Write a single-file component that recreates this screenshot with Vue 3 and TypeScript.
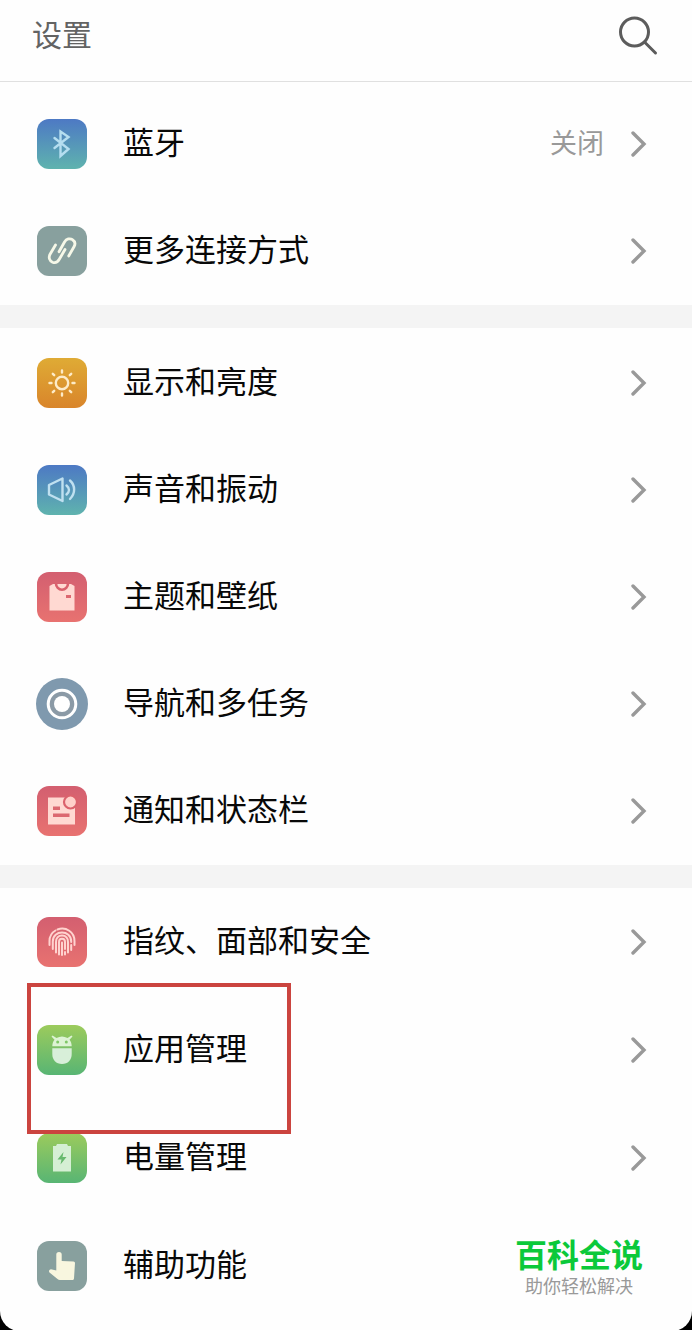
<script setup lang="ts">
type IconName =
  | 'bluetooth' | 'link' | 'sun' | 'sound' | 'theme' | 'nav'
  | 'notice' | 'finger' | 'android' | 'battery' | 'hand'

interface Item {
  icon: IconName
  tone: string
  label: string
  value?: string
  marked?: boolean
  plain?: boolean
}

const groups: Item[][] = [
  [
    { icon: 'bluetooth', tone: 'blue', label: '蓝牙', value: '关闭' },
    { icon: 'link', tone: 'gray', label: '更多连接方式' },
  ],
  [
    { icon: 'sun', tone: 'orange', label: '显示和亮度' },
    { icon: 'sound', tone: 'blue', label: '声音和振动' },
    { icon: 'theme', tone: 'red', label: '主题和壁纸' },
    { icon: 'nav', tone: 'round', label: '导航和多任务' },
    { icon: 'notice', tone: 'red', label: '通知和状态栏' },
  ],
  [
    { icon: 'finger', tone: 'red', label: '指纹、面部和安全' },
    { icon: 'android', tone: 'green', label: '应用管理', marked: true },
    { icon: 'battery', tone: 'green', label: '电量管理' },
    { icon: 'hand', tone: 'gray', label: '辅助功能', plain: true },
  ],
]
</script>

<template>
  <div class="page">
    <header class="bar">
      <h1>设置</h1>
      <button class="search" type="button" aria-label="搜索">
        <svg viewBox="0 0 40 40" fill="none" stroke="#5c5c5c" stroke-width="3" stroke-linecap="round">
          <circle cx="16.500" cy="16" r="14" />
          <path d="M26.500 26 L37.500 37" />
        </svg>
      </button>
    </header>

    <main>
      <ul v-for="(group, g) in groups" :key="g" class="group">
        <li v-for="item in group" :key="item.label" :class="{ marked: item.marked }">
          <a class="row" href="#">
            <span class="tile" :class="item.tone">
              <svg viewBox="0 0 50 50" fill="none" stroke-linejoin="round" stroke-linecap="round">
                <path
                  v-if="item.icon === 'bluetooth'"
                  d="M17.500 19 L31.500 30 L23.500 37 V12.500 L31.500 18 L17.500 29"
                  stroke="#b5def0" stroke-width="2.400" stroke-linejoin="miter"
                />
                <g v-else-if="item.icon === 'link'" stroke="#f6f8e8" stroke-width="2.800">
                  <path d="M18.500 19 L13.200 28 C11.200 31.500 12.500 35 15.500 36.200 C18.500 37.300 20.800 36 22.300 33.300 L28 23.500" />
                  <path d="M22 25.700 L27.500 16 C29.500 12.700 33 12 35.500 13.700 C38 15.300 38.500 18 37 20.700 L31.700 30" />
                </g>
                <g v-else-if="item.icon === 'sun'" stroke="#fdebc8" stroke-width="2.400">
                  <circle cx="25" cy="25" r="6.200" />
                  <path d="M25 12.500 V14.500 M25 35.500 V37.500 M12.500 25 H14.500 M35.500 25 H37.500 M15.800 15.800 L17.200 17.200 M32.800 32.800 L34.200 34.200 M34.200 15.800 L32.800 17.200 M17.200 32.800 L15.800 34.200" />
                </g>
                <g v-else-if="item.icon === 'sound'" stroke="#bfe0f0" stroke-width="2.400">
                  <path d="M12 20 L25.500 13.500 V36 L12 29.500 Z" />
                  <path d="M29.500 20.500 Q34.500 25 29.500 29.500" />
                  <path d="M33 15.500 C38.500 20.500 38.500 28.500 33 34" />
                </g>
                <g v-else-if="item.icon === 'theme'">
                  <path d="M12.500 14 L16 12 H34 L37.500 14 V38.500 H12.500 Z" fill="#ffd9d2" />
                  <path d="M19 11.500 a6 6.200 0 0 0 12 0" stroke="#d9606c" stroke-width="2.600" stroke-linecap="butt" />
                  <rect x="29" y="23" width="5" height="3" fill="#dc6870" />
                </g>
                <g v-else-if="item.icon === 'nav'">
                  <circle cx="25" cy="25" r="26" fill="#7f99ae" />
                  <circle cx="25" cy="25" r="13.800" fill="#8b9aa6" stroke="#fff" stroke-width="3" />
                  <circle cx="25" cy="25" r="8" fill="#fff" />
                </g>
                <g v-else-if="item.icon === 'notice'">
                  <path d="M11 11.500 H38 V38.500 H11 Z" fill="#ffd9d2" />
                  <circle cx="33.500" cy="16" r="6.500" fill="#ffd0ca" stroke="#db626c" stroke-width="2.200" />
                  <path d="M16 20.500 h7 v3.500 h-7 Z M16 27.500 h16.500 v3.500 h-16.500 Z" fill="#dc6870" />
                </g>
                <g v-else-if="item.icon === 'finger'" stroke="#ffd3cf" stroke-width="2">
                  <path d="M12.500 28 V24 C12.500 19 15 15.500 18.500 13.500 M20.500 12.500 C29 9.500 37.500 15 37.500 24 V28" />
                  <path d="M15.800 32 V24.500 C15.800 12.500 34.200 12.500 34.200 24.500 V25 M34.200 28 V33" />
                  <path d="M19 35.500 V25 C19 21 21.500 18.500 25 18.500 C29 18.500 31 21.500 31 25 V35.500" />
                  <path d="M22 37.500 V25 C22 20.700 28 20.700 28 25 V32 M28 35 V37.500 M25 25.500 V38" />
                </g>
                <g v-else-if="item.icon === 'android'">
                  <path d="M15.300 21.300 C15.300 18.500 16.200 16.300 17.500 14.800 L14.500 11.500 L15.500 10.500 L19.500 13 Q25 9.800 30.500 13 L34.500 10.500 L35.500 11.500 L32.500 14.800 C33.800 16.300 34.700 18.500 34.700 21.300 Z" fill="#ddf3d4" />
                  <path d="M15.300 23.300 H34.700 V29 C34.700 35 31 39 25 39 C19 39 15.300 35 15.300 29 Z" fill="#d8efd9" />
                  <circle cx="20.700" cy="17" r="1.500" fill="#7fc766" />
                  <circle cx="29.300" cy="17" r="1.500" fill="#7fc766" />
                </g>
                <g v-else-if="item.icon === 'battery'">
                  <path d="M16 13 H19 L20 11 H30 L31 13 H34 V38.500 H16 Z" fill="#d5efd4" />
                  <path d="M26.500 19 L20.500 26.500 H24.500 L23.500 31.500 L29.500 24 H25.500 Z" fill="#67b96d" />
                </g>
                <path
                  v-else
                  d="M19.300 13.500 Q19.300 11 22 11 Q24.700 11 24.700 13.500 V20 L36.500 20.500 Q38 20.600 38 22 L37 37.500 Q36.800 39 35.500 39 H23 Q21.500 39 20.500 38 L12.500 31.500 Q11.500 30 12.500 29 Q13.500 28 15 28.500 L19.300 29.500 Z"
                  fill="#f8f6df"
                />
              </svg>
            </span>
            <span class="label">{{ item.label }}</span>
            <span v-if="item.value" class="value">{{ item.value }}</span>
            <svg v-if="!item.plain" class="chevron" viewBox="0 0 16 28" fill="none" stroke="#999" stroke-width="3.400" stroke-linecap="round">
              <path d="M2 3 L13 14 L2 25" />
            </svg>
          </a>
        </li>
      </ul>
    </main>

    <div class="brand">
      <strong>百科全说</strong>
      <span>助你轻松解决</span>
    </div>
  </div>
</template>

<style>
body {
  margin: 0;
  background: #000;
}
</style>

<style scoped>
.page {
  position: relative;
  box-sizing: border-box;
  min-height: 100vh;
  overflow: hidden;
  background: #fefefe;
  border-radius: 0 0 20px 20px;
  font-family: "Liberation Sans", "Noto Sans CJK SC", sans-serif;
}

.bar {
  display: flex;
  align-items: center;
  justify-content: space-between;
  box-sizing: border-box;
  height: 82px;
  padding: 0 34px 10px 32px;
  border-bottom: 1px solid #e0e0e0;
}

h1 {
  margin: 0;
  color: #636363;
  font-size: 30px;
  font-weight: 400;
  line-height: 40px;
}

.search {
  width: 40px;
  height: 40px;
  padding: 0;
  border: 0;
  background: none;
}

.search svg {
  display: block;
}

.group {
  margin: 0;
  padding: 1px 0;
  list-style: none;
}

.group:first-child {
  padding-top: 8px;
}

.group + .group {
  border-top: 23px solid #f4f4f4;
}

.group:last-child {
  display: grid;
  gap: 1px;
  padding: 0 0 12px;
}

.row {
  display: flex;
  align-items: center;
  height: 107px;
  padding: 0 45px 0 37px;
  color: #080808;
  text-decoration: none;
}

.tile {
  flex: none;
  width: 50px;
  height: 50px;
  margin-right: 36px;
  border-radius: 12px;
}

.tile svg {
  display: block;
  overflow: visible;
}

.blue { background: linear-gradient(#4d79c4, #5fb3ae); }
.gray { background: #88a09e; }
.orange { background: linear-gradient(#dfab35, #d9852b); }
.red { background: linear-gradient(#d35f70, #e87270); }
.green { background: linear-gradient(#9ccb5c, #58b574); }

.label {
  flex: 1;
  font-size: 31px;
  line-height: 44px;
}

.value {
  margin-right: 27px;
  color: #999;
  font-size: 27px;
  line-height: 44px;
}

.chevron {
  flex: none;
  width: 16px;
  height: 28px;
}

.marked {
  position: relative;
}

.marked::after {
  content: "";
  position: absolute;
  z-index: 1;
  top: -13px;
  left: 27px;
  box-sizing: border-box;
  width: 264px;
  height: 151px;
  border: 4px solid #cb443f;
  pointer-events: none;
}

.brand {
  position: absolute;
  right: 49px;
  bottom: 32px;
  display: flex;
  flex-direction: column;
  align-items: center;
}

.brand strong {
  color: #0bc93a;
  font-size: 32px;
  font-weight: 700;
  line-height: 38px;
}

.brand span {
  color: #999;
  font-size: 18px;
  line-height: 24px;
}
</style>
